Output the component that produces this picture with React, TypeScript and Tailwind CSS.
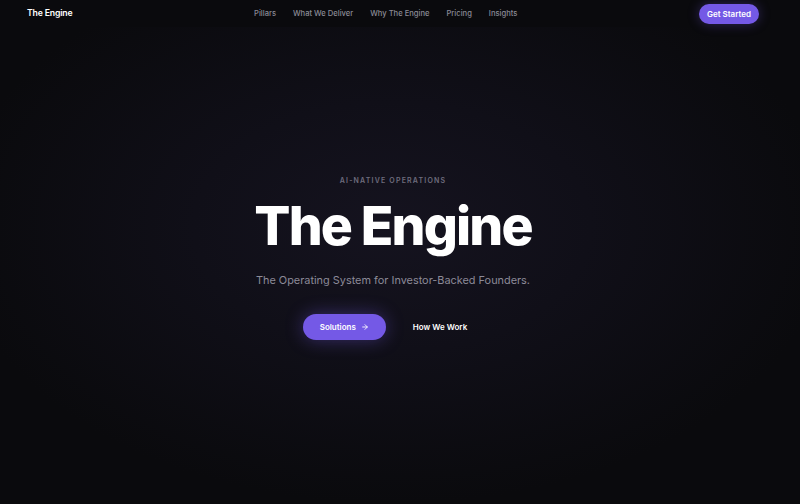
import React from "react";

export default function App() {
  return (
    <div
      className="relative w-[800px] h-[504px] overflow-hidden bg-[#09090c] text-white"
      style={{ fontFamily: "Inter, 'Noto Sans', sans-serif" }}
    >
      <div className="absolute inset-0 bg-[radial-gradient(ellipse_55%_55%_at_49%_45%,#15131f_0%,#100f18_45%,#0a0a0d_100%)]" />
      <div className="relative flex flex-col h-full w-[786px]">
        <header className="h-[27px] flex items-center justify-between px-[27px] bg-[#0a0a0d]/90">
          <div className="text-[8.7px] font-semibold tracking-[-0.02em] text-white">The Engine</div>
          <nav className="flex items-center gap-[17px] text-[7.6px] text-[#8b8b96] font-medium">
            <span>Pillars</span>
            <span>What We Deliver</span>
            <span>Why The Engine</span>
            <span>Pricing</span>
            <span>Insights</span>
          </nav>
          <button className="h-[20px] w-[60px] rounded-full bg-[#7459e6] text-[8px] font-semibold text-white shadow-[0_0_12px_rgba(116,89,230,0.35)]">
            Get Started
          </button>
        </header>
        <main className="flex-1 flex flex-col items-center pt-[149px]">
          <div className="text-[7px] font-semibold tracking-[0.17em] text-[#6e6c7c]">AI-NATIVE OPERATIONS</div>
          <h1 className="mt-[10px] text-[53.5px] leading-[58px] font-extrabold tracking-[-0.035em] text-white">The Engine</h1>
          <p className="mt-[17px] text-[10.9px] text-[#8c8a98]">The Operating System for Investor-Backed Founders.</p>
          <div className="mt-[26px] flex items-center gap-[27px] ml-[-16px]">
            <button className="h-[26px] w-[83px] rounded-full bg-[#7459e6] text-[8px] font-semibold text-white flex items-center justify-center gap-[5px] shadow-[0_0_18px_rgba(116,89,230,0.4)]">
              Solutions
              <svg width="8" height="8" viewBox="0 0 24 24" fill="none" stroke="currentColor" strokeWidth="2.6" strokeLinecap="round" strokeLinejoin="round">
                <path d="M5 12h14" />
                <path d="M12 5l7 7-7 7" />
              </svg>
            </button>
            <span className="text-[8px] font-semibold text-white">How We Work</span>
          </div>
        </main>
      </div>
    </div>
  );
}
